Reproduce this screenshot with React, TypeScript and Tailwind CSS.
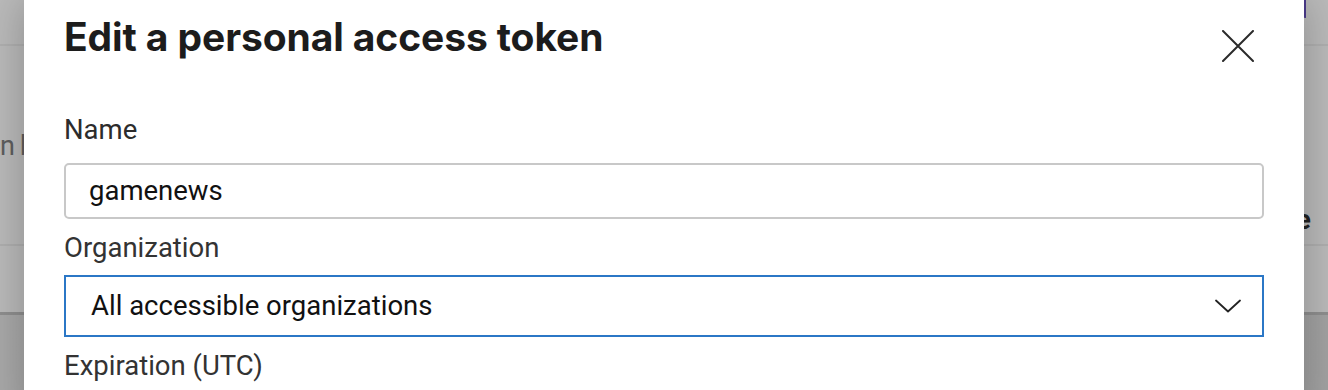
import React from 'react';

const font = { fontFamily: 'Roboto, "Liberation Sans", sans-serif' };

function CloseIcon() {
  return (
    <svg className="block" width="32" height="32" viewBox="0 0 32 32" fill="none">
      <path d="M1 1 L31 31 M31 1 L1 31" stroke="#2b2b2b" strokeWidth="2" strokeLinecap="round" />
    </svg>
  );
}

function Chevron() {
  return (
    <svg className="block" width="26" height="14" viewBox="0 0 26 14" fill="none">
      <path d="M1 1.5 L13 12.5 L25 1.5" stroke="#222" strokeWidth="1.8" strokeLinecap="round" strokeLinejoin="round" />
    </svg>
  );
}

export default function App() {
  return (
    <div className="relative w-full h-[390px] overflow-hidden bg-[#bababa]" style={font}>
      {/* dimmed page behind the dialog */}
      <div className="flex flex-col h-full">
        <div className="h-[44px] flex justify-end">
          <div className="w-[12px] h-[18px] mr-[22px] bg-[#4b3b8c] rounded-bl-full" />
        </div>
        <div className="h-[2px] bg-[#b0b0b0]" />
        <div className="h-[198px] flex justify-between items-start">
          <span className="mt-[82px] text-[27px] text-[#5e5e5e] leading-[36px]">
            n<span className="ml-[5px]">b</span>
          </span>
          <span className="mt-[156px] mr-[17px] text-[28px] font-bold text-[#222] leading-[36px]">Expire</span>
        </div>
        <div className="h-[2px] bg-[#afafaf]" />
        <div className="h-[66px]" />
        <div className="h-[3px] bg-[#8f8f8f]" />
        <div className="flex-1 bg-gradient-to-r from-[#a9a9a9] to-[#a2a2a2]" />
      </div>

      {/* dialog */}
      <div className="absolute left-6 top-0 w-[1280px] h-[420px] bg-white shadow-[0_0_40px_rgba(0,0,0,0.25)] px-10">
        <div className="h-[44px] mt-[15px] flex justify-between items-start">
          <h1
            className="text-[39px] leading-[44px] font-bold text-[#1c1c1c] tracking-[-0.1px]"
            style={{ fontFamily: 'Inter, Roboto, sans-serif' }}
          >
            Edit a personal access token
          </h1>
          <button className="mt-[15px] mr-[10px]">
            <CloseIcon />
          </button>
        </div>

        <div className="mt-[53px] text-[27.5px] leading-[36px] text-[#2c2c2c]">Name</div>
        <div className="mt-[15px] h-[56px] border-2 border-[#c8c8c8] rounded-[5px] flex items-center px-[23px] text-[27.5px] text-[#111]">
          gamenews
        </div>

        <div className="mt-[11px] text-[27.5px] leading-[36px] text-[#333]">Organization</div>
        <div className="mt-[9px] h-[62px] border-2 border-[#2b77c6] flex items-center justify-between pl-[25px] pr-[21px] text-[27.5px] text-[#111]">
          <span>All accessible organizations</span>
          <Chevron />
        </div>

        <div className="mt-[11px] text-[27.5px] leading-[36px] text-[#333]">Expiration (UTC)</div>
      </div>
    </div>
  );
}
